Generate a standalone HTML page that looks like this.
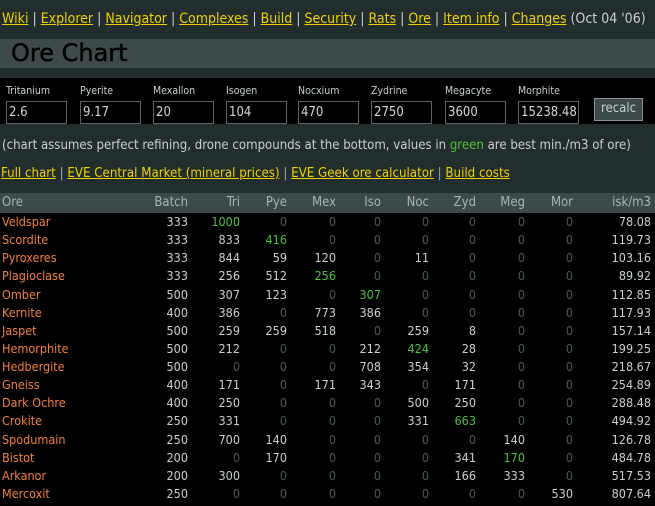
<!DOCTYPE html>
<html><head><meta charset="utf-8"><style>
*{margin:0;padding:0;box-sizing:border-box}
body{width:655px;height:506px;overflow:hidden;background:#222d2d;font-family:"DejaVu Sans Condensed","Liberation Sans",sans-serif;font-size:12.5px;color:#c8d0d0;position:relative}
a{color:#f0d000;text-decoration:underline}
.sep{color:#a0a8a8}
#nav{position:absolute;left:2px;top:11px;white-space:nowrap;font-size:14px}
#nav .d{color:#c8d0d0}
#title{position:absolute;left:0;top:39px;width:655px;height:29px;background:#3c4a4a}
#title span{position:absolute;left:11px;top:0;font-size:24px;color:#000;font-family:"DejaVu Sans","Liberation Sans",sans-serif;-webkit-text-stroke:0.4px #000}
#form{position:absolute;left:0;top:78px;width:655px;height:46px;background:#000}
.f{position:absolute;top:7px;font-size:10.5px;color:#c8d0d0}
.f div{position:absolute;left:0;top:16px;width:61px;height:23px;border:1px solid #5a6464;background:#000;font-size:13px;padding:3px 0 0 2px;color:#d0d8d8}
#btn{position:absolute;left:594px;top:20px;width:49px;height:23px;background:#3c4a4a;border:1px solid #8a9494;color:#c8d0d0;font-size:13px;text-align:center;line-height:20px}
#note{position:absolute;left:2px;top:138px;font-size:13.1px;white-space:nowrap}
#links{position:absolute;left:1px;top:166px;font-size:13.2px;white-space:nowrap}
#tbl{position:absolute;left:0;top:193px;width:655px;height:313px;background:#000}
.r{position:absolute;left:0;width:655px;height:18px;font-size:12.5px}
.r.h{background:#3c4a4a;color:#a8b4b4;height:20px;top:0;font-size:13px}
.r span{position:absolute;top:2px;text-align:right;width:60px}
.r span.n{left:2px;text-align:left;color:#f08040;width:150px}
.h span.n{color:#a8b4b4}
.z{color:#4a5a5a}.g{color:#50c040}
</style></head><body>
<div id="nav"><a>Wiki</a> <span class="d">|</span> <a>Explorer</a> <span class="d">|</span> <a>Navigator</a> <span class="d">|</span> <a>Complexes</a> <span class="d">|</span> <a>Build</a> <span class="d">|</span> <a>Security</a> <span class="d">|</span> <a>Rats</a> <span class="d">|</span> <a>Ore</a> <span class="d">|</span> <a>Item info</a> <span class="d">|</span> <a>Changes</a> <span class="d">(Oct 04 '06)</span></div>
<div id="title"><span>Ore Chart</span></div>
<div id="form">
<div class="f" style="left:6px">Tritanium<div>2.6</div></div>
<div class="f" style="left:80px">Pyerite<div>9.17</div></div>
<div class="f" style="left:153px">Mexallon<div>20</div></div>
<div class="f" style="left:226px">Isogen<div>104</div></div>
<div class="f" style="left:298px">Nocxium<div>470</div></div>
<div class="f" style="left:371px">Zydrine<div>2750</div></div>
<div class="f" style="left:445px">Megacyte<div>3600</div></div>
<div class="f" style="left:518px">Morphite<div>15238.48</div></div>
<div id="btn">recalc</div>
</div>
<div id="note">(chart assumes perfect refining, drone compounds at the bottom, values in <span class="g">green</span> are best min./m3 of ore)</div>
<div id="links"><a>Full chart</a> <span class="sep">|</span> <a>EVE Central Market (mineral prices)</a> <span class="sep">|</span> <a>EVE Geek ore calculator</a> <span class="sep">|</span> <a>Build costs</a></div>
<div id="tbl"></div>
<script>
var rows=[
["Ore","Batch","Tri","Pye","Mex","Iso","Noc","Zyd","Meg","Mor","isk/m3"],
["Veldspar",333,"g1000",0,0,0,0,0,0,0,"78.08"],
["Scordite",333,833,"g416",0,0,0,0,0,0,"119.73"],
["Pyroxeres",333,844,59,120,0,11,0,0,0,"103.16"],
["Plagioclase",333,256,512,"g256",0,0,0,0,0,"89.92"],
["Omber",500,307,123,0,"g307",0,0,0,0,"112.85"],
["Kernite",400,386,0,773,386,0,0,0,0,"117.93"],
["Jaspet",500,259,259,518,0,259,8,0,0,"157.14"],
["Hemorphite",500,212,0,0,212,"g424",28,0,0,"199.25"],
["Hedbergite",500,0,0,0,708,354,32,0,0,"218.67"],
["Gneiss",400,171,0,171,343,0,171,0,0,"254.89"],
["Dark Ochre",400,250,0,0,0,500,250,0,0,"288.48"],
["Crokite",250,331,0,0,0,331,"g663",0,0,"494.92"],
["Spodumain",250,700,140,0,0,0,0,140,0,"126.78"],
["Bistot",200,0,170,0,0,0,341,"g170",0,"484.78"],
["Arkanor",200,300,0,0,0,0,166,333,0,"517.53"],
["Mercoxit",250,0,0,0,0,0,0,0,530,"807.64"]];
var rt=[188,240,287,336,381,429,476,525,573,651];
var t=document.getElementById("tbl"),h="";
rows.forEach(function(r,i){
 var top=i==0?0:19+(i-1)*18.13;
 h+='<div class="r'+(i==0?' h':'')+'" style="top:'+top+'px"><span class="n">'+r[0]+'</span>';
 for(var c=1;c<r.length;c++){var v=String(r[c]),cl="";
  if(i>0){if(v[0]=="g"){cl="g";v=v.slice(1)}else if(v=="0")cl="z";}
  h+='<span class="'+cl+'" style="left:'+(rt[c-1]-60)+'px">'+v+'</span>';}
 h+='</div>';});
t.innerHTML=h;
</script>
</body></html>
